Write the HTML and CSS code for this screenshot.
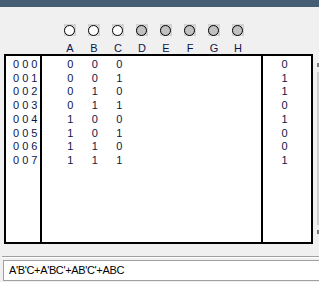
FILE: index.html
```html
<!DOCTYPE html>
<html lang="en">
<head>
    <meta charset="UTF-8">
    <meta name="viewport" content="width=device-width, initial-scale=1.0">
    <title>Truth table</title>
    <link rel="stylesheet" href="styles.css">
</head>
<body>
    <div class="titlebar"></div>

    <div class="pins" id="pins"></div>

    <div class="table-row">
        <div class="truth">
            <div class="col-index" id="col-index"></div>
            <div class="col-inputs" id="col-inputs"></div>
            <div class="col-output" id="col-output"></div>
        </div>
        <div class="vscroll">
            <span class="arrow"></span>
            <span class="track"></span>
            <span class="arrow"></span>
        </div>
    </div>

    <div class="separator"></div>
    <div class="expression">A'B'C+A'BC'+AB'C'+ABC</div>

    <script>
        var labels = ['A', 'B', 'C', 'D', 'E', 'F', 'G', 'H'];
        var usedInputs = 3;
        var outputs = [0, 1, 1, 0, 1, 0, 0, 1];

        var pins = document.getElementById('pins');
        var colIndex = document.getElementById('col-index');
        var colInputs = document.getElementById('col-inputs');
        var colOutput = document.getElementById('col-output');

        for (var i = 0; i < labels.length; i++) {
            var pin = document.createElement('div');
            pin.className = 'pin';

            var cell = document.createElement('span');
            cell.className = 'pin-cell';
            var dot = document.createElement('span');
            dot.className = 'pin-dot';
            if (i >= usedInputs) {
                dot.classList.add('off');
            }
            cell.appendChild(dot);

            var label = document.createElement('span');
            label.className = 'pin-label';
            label.textContent = labels[i];

            pin.appendChild(cell);
            pin.appendChild(label);
            pins.appendChild(pin);
        }

        for (var r = 0; r < outputs.length; r++) {
            var idx = document.createElement('div');
            idx.className = 'line';
            idx.textContent = '0 0 ' + r;
            colIndex.appendChild(idx);

            var bits = document.createElement('div');
            bits.className = 'line bits';
            for (var b = usedInputs - 1; b >= 0; b--) {
                var bit = document.createElement('span');
                bit.textContent = (r >> b) & 1;
                bits.appendChild(bit);
            }
            colInputs.appendChild(bits);

            var out = document.createElement('div');
            out.className = 'line';
            out.textContent = outputs[r];
            colOutput.appendChild(out);
        }
    </script>
</body>
</html>
```

FILE: styles.css
```css
body {
    margin: 0;
    background-color: #f0f0f0;
    font-family: "Liberation Sans", Arial, sans-serif;
    font-size: 11px;
    color: #000;
    overflow: hidden;
}

.titlebar {
    height: 7px;
    background-color: #465e74;
}

.pins {
    display: flex;
    margin-left: 58px;
    padding-top: 17px;
}

.pin {
    width: 24px;
    display: flex;
    flex-direction: column;
    align-items: center;
}

.pin-cell {
    width: 12px;
    height: 12px;
    margin-right: 1px;
    background-color: #d2d2d2;
    display: flex;
    align-items: center;
    justify-content: center;
}

.pin-dot {
    box-sizing: border-box;
    width: 11px;
    height: 11px;
    border: 1px solid #000;
    border-radius: 50%;
    background-color: #fff;
}

.pin-dot.off {
    background-color: #c0c0c0;
}

.pin-label {
    margin-top: 6px;
    height: 12px;
    line-height: 12px;
    color: #0e1648;
}

.table-row {
    display: flex;
    align-items: flex-start;
}

.truth {
    display: grid;
    grid-template-columns: 36px 221px 48px;
    margin-left: 4px;
    height: 186px;
    border: 2px solid #000;
    background: #fff;
    color: #0e1648;
}

.col-index,
.col-inputs,
.col-output {
    padding-top: 2px;
}

.col-index {
    padding-left: 7px;
    border-right: 2px solid #000;
}

.col-inputs {
    padding-left: 16px;
    border-right: 2px solid #000;
}

.col-output {
    padding-right: 5px;
    text-align: center;
}

.line {
    line-height: 13.7px;
    white-space: pre;
}

.bits {
    display: flex;
}

.bits span {
    width: 24.5px;
    text-align: center;
}

.vscroll {
    display: flex;
    flex-direction: column;
    margin-left: 4px;
    margin-top: 9px;
    width: 2px;
    gap: 5px;
}

.vscroll .arrow {
    height: 4px;
    background-color: #7a7a7a;
}

.vscroll .track {
    height: 153px;
    background-color: #cdcdcd;
}

.separator {
    margin-top: 12px;
    margin-left: 2px;
    border-top: 1px solid #a0a0a0;
    border-bottom: 1px solid #fff;
}

.expression {
    margin-top: 2px;
    margin-left: 3px;
    height: 19px;
    line-height: 19px;
    padding-left: 5px;
    border: 1px solid #a0a0a0;
    border-right: none;
    background: #fff;
    letter-spacing: -0.35px;
}
```
